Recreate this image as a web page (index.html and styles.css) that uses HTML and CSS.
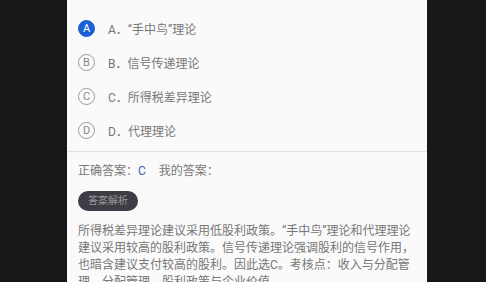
FILE: index.html
```html
<!DOCTYPE html>
<html lang="zh-CN">
<head>
  <meta charset="UTF-8">
  <meta name="viewport" content="width=device-width, initial-scale=1.0">
  <title>答题解析</title>
  <link rel="stylesheet" href="styles.css">
</head>
<body>
  <div class="page">
    <ul class="options">
      <li class="option selected"><span class="badge">A</span><span class="label">A．“手中鸟”理论</span></li>
      <li class="option"><span class="badge">B</span><span class="label">B．信号传递理论</span></li>
      <li class="option"><span class="badge">C</span><span class="label">C．所得税差异理论</span></li>
      <li class="option"><span class="badge">D</span><span class="label">D．代理理论</span></li>
    </ul>
    <div class="answer">
      <div class="answer-line">
        <span>正确答案：</span><span class="right">C</span>
        <span class="mine">我的答案：</span>
      </div>
      <span class="analysis-btn">答案解析</span>
      <p class="analysis">所得税差异理论建议采用低股利政策。“手中鸟”理论和代理理论建议采用较高的股利政策。信号传递理论强调股利的信号作用，也暗含建议支付较高的股利。因此选C。考核点：收入与分配管理，分配管理，股利政策与企业价值。</p>
    </div>
  </div>
</body>
</html>
```

FILE: styles.css
```css
* {
  margin: 0;
  padding: 0;
  box-sizing: border-box;
}

body {
  font-family: Roboto, "Noto Sans CJK SC", sans-serif;
  font-size: 12px;
  background-color: #171717;
  height: 100vh;
  overflow: hidden;
}

.page {
  width: 360px;
  height: 100vh;
  margin-left: 67px;
  background-color: #fafafa;
  padding-top: 11px;
}

.options {
  list-style: none;
  padding: 0 11px;
}

.option {
  height: 34px;
  display: flex;
  align-items: center;
  color: #777;
}

.badge {
  width: 17px;
  height: 17px;
  border: 1px solid #999;
  border-radius: 50%;
  display: flex;
  align-items: center;
  justify-content: center;
  font-size: 11px;
  color: #888;
  margin-right: 13px;
}

.option.selected .badge {
  background-color: #1a5fd3;
  border-color: #1a5fd3;
  color: #fff;
}

.answer {
  margin-top: 4px;
  border-top: 1px solid #e2e2e2;
  padding: 9px 11px 0 11px;
}

.answer-line {
  height: 20px;
  line-height: 20px;
  color: #777;
}

.answer-line .right {
  color: #2f62b3;
}

.answer-line .mine {
  margin-left: 10px;
}

.analysis-btn {
  display: inline-block;
  margin-top: 10px;
  height: 20px;
  line-height: 20px;
  padding: 0 10px;
  border-radius: 10px;
  background-color: #3e3d45;
  color: #9a9a9a;
  font-size: 10px;
}

.analysis {
  margin-top: 12px;
  line-height: 17px;
  color: #777;
}
```
